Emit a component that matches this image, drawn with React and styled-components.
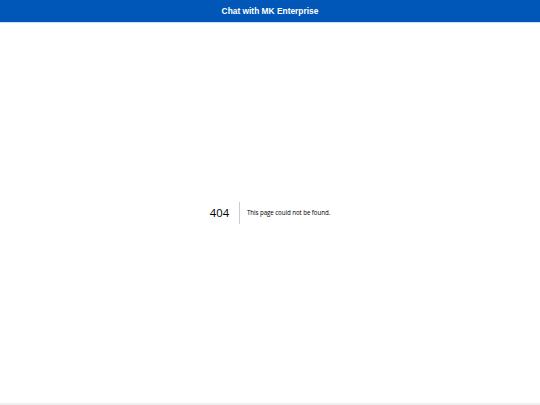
import styled, { createGlobalStyle } from 'styled-components';

const GlobalStyle = createGlobalStyle`
  html, body {
    margin: 0;
    padding: 0;
    background: #fff;
  }
  * {
    box-sizing: border-box;
  }
`;

function App() {
  return (
    <>
      <GlobalStyle />
      <Page>
        <Header>Chat with MK Enterprise</Header>
        <Main>
          <ErrorBox>
            <Code>404</Code>
            <Message>This page could not be found.</Message>
          </ErrorBox>
        </Main>
        <Footer />
      </Page>
    </>
  );
}

export default App;

const Page = styled.div`
  display: flex;
  flex-direction: column;
  height: 100vh;
`;

const Header = styled.header`
  height: 23px;
  background: #0057b7;
  border-bottom: 1px solid #bfe6ff;
  color: #fff;
  font-family: 'Liberation Sans', Arial, sans-serif;
  font-weight: 700;
  font-size: 8.4px;
  display: flex;
  align-items: center;
  justify-content: center;
`;

const Main = styled.main`
  flex: 1;
  display: flex;
  align-items: center;
  justify-content: center;
  font-family: 'Open Sans', 'Noto Sans', sans-serif;
  color: #000;
`;

const ErrorBox = styled.div`
  display: flex;
  align-items: center;
`;

const Code = styled.h1`
  margin: 0 7px 0 0;
  padding: 0 10px 0 0;
  font-size: 11.2px;
  font-weight: 400;
  line-height: 22px;
  border-right: 1px solid rgba(0, 0, 0, 0.2);
`;

const Message = styled.h2`
  margin: 0;
  font-size: 6.2px;
  font-weight: 400;
  letter-spacing: -0.08px;
  line-height: 22px;
`;

const Footer = styled.footer`
  height: 2px;
  background: #efefef;
`;
